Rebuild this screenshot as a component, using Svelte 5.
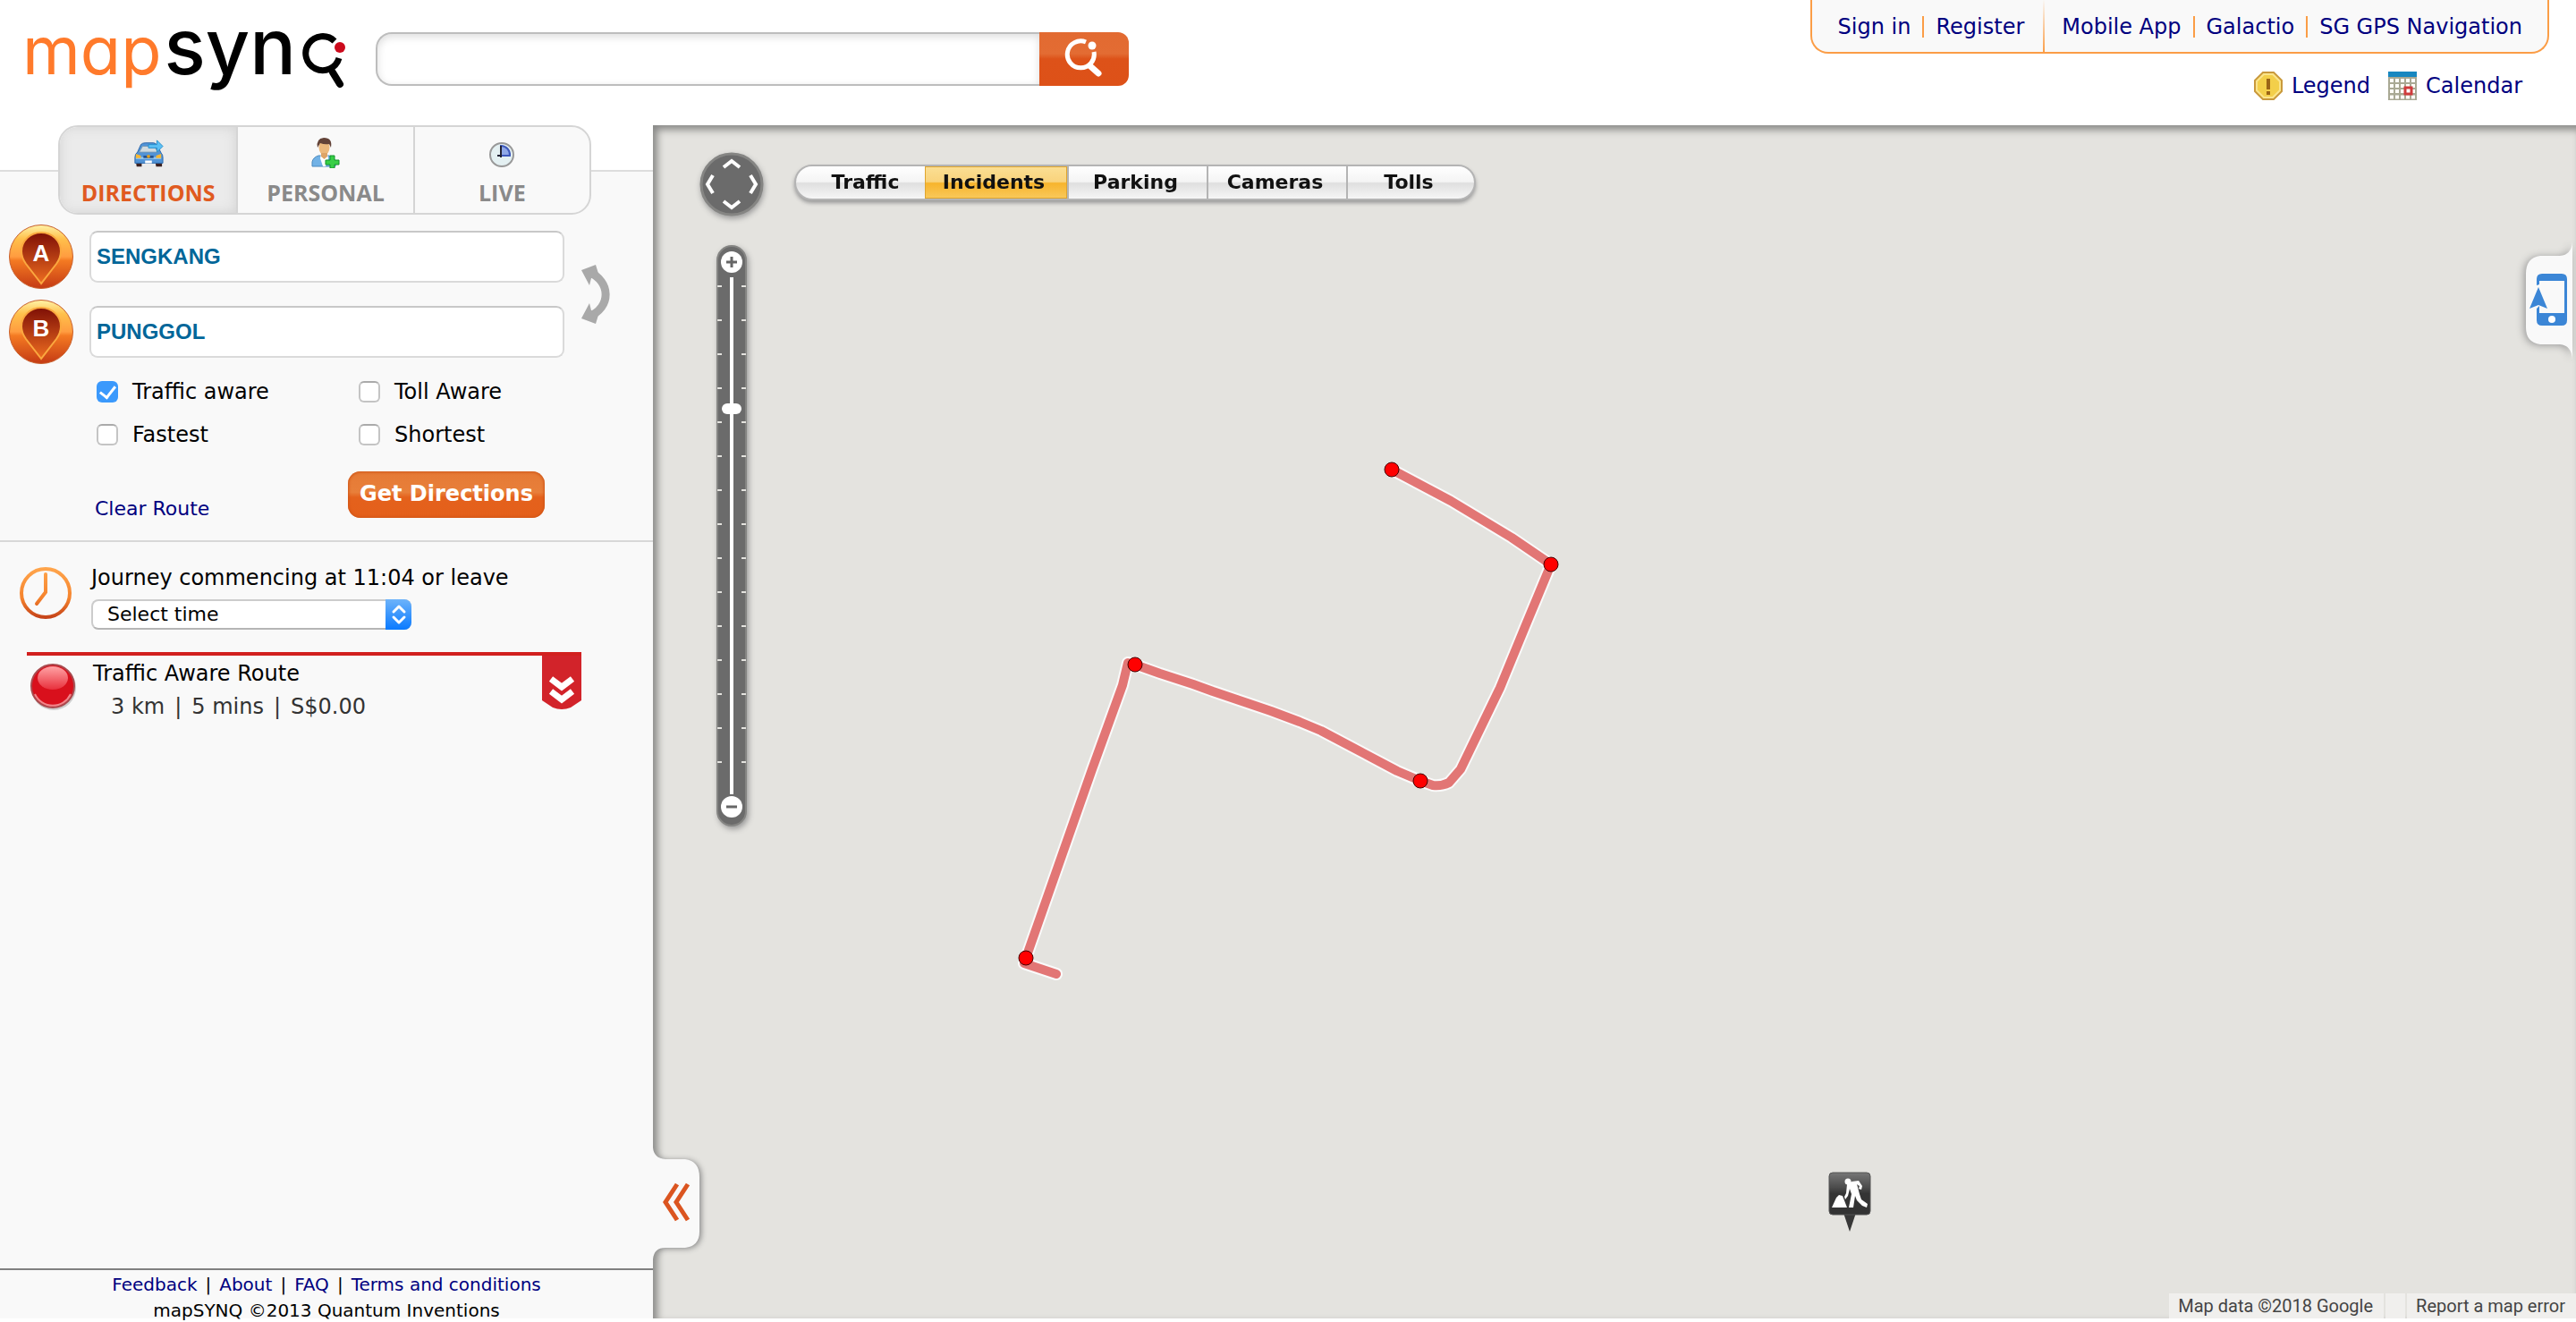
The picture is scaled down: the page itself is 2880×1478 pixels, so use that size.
<script>
  const accountLinks = ['Sign in', 'Register'];
  const productLinks = ['Mobile App', 'Galactio', 'SG GPS Navigation'];
  const layers = ['Traffic', 'Incidents', 'Parking', 'Cameras', 'Tolls'];
  const footerLinks = ['Feedback', 'About', 'FAQ', 'Terms and conditions'];
  const costs = ['3 km', '5 mins', 'S$0.00'];

  let activeLayer = $state('Incidents');
  let places = $state([
    { id: 'A', label: 'Start', value: 'SENGKANG' },
    { id: 'B', label: 'Destination', value: 'PUNGGOL' }
  ]);
  let options = $state([
    { label: 'Traffic aware', on: true },
    { label: 'Toll Aware', on: false },
    { label: 'Fastest', on: false },
    { label: 'Shortest', on: false }
  ]);

  const route =
    'M826 385 L892 420 L960 461 L1004 491 L977 556 L947 629 L903 720 L890 735 Q882 739 872 738 L858 733 L832 722 L747 677 L723 667 L691 655 L626 633 L604 625 L567 613 L539 603 L531 601 L525 626 L491 720 L417 931 L415 937 L451 949';
  const stops = [[826, 385], [1004, 491], [858, 733], [539, 603], [417, 931]];
  const ticks = Array.from({ length: 15 }, (_, i) => 46 + i * 38);

  function swap() {
    const first = places[0].value;
    places[0].value = places[1].value;
    places[1].value = first;
  }
</script>

<div class="page">
  <header>
    <a class="logo" href="#home" aria-label="mapsynq">
      <span class="map-word">map</span><span class="syn-word">syn</span>
      <svg width="52" height="64" viewBox="0 0 52 64" aria-hidden="true">
        <path d="M36 10 A19 19 0 1 0 41 29" fill="none" stroke="#000" stroke-width="7" />
        <path d="M34 45 L42 58" stroke="#000" stroke-width="8" stroke-linecap="round" />
        <circle cx="42" cy="17" r="6" fill="#cc0a1c" />
      </svg>
    </a>
    <form class="search" onsubmit={(e) => e.preventDefault()}>
      <input type="text" aria-label="Search" />
      <button aria-label="Search">
        <svg width="46" height="46" viewBox="0 0 46 46" aria-hidden="true">
          <path d="M25 4 A15 15 0 1 0 34 15" fill="none" stroke="#fff" stroke-width="5" />
          <path d="M30 31 L39 39" stroke="#fff" stroke-width="7" stroke-linecap="round" />
          <circle cx="32" cy="8" r="4.500" fill="#fff" />
        </svg>
      </button>
    </form>
    <div class="header-right">
      <nav class="top-nav" aria-label="Site">
        <div class="group account">
          {#each accountLinks as link}<a href="#top">{link}</a>{/each}
        </div>
        <div class="group products">
          {#each productLinks as link}<a href="#top">{link}</a>{/each}
        </div>
      </nav>
      <div class="tools">
        <a href="#legend">
          <svg width="32" height="32" viewBox="0 0 32 32" aria-hidden="true">
            <path d="M10 1 H22 L31 10 V22 L22 31 H10 L1 22 V10Z" fill="#f3cf4a" stroke="#c9993c" stroke-width="2" />
            <path d="M11 3 H21 L29 11 V21 L21 29 H11 L3 21 V11Z" fill="none" stroke="#fae48c" stroke-width="2" />
            <path d="M14 8 H18 V20 H14Z M14 22 H18 V26 H14Z" fill="#9a6416" />
          </svg>Legend</a>
        <a href="#calendar">
          <svg width="32" height="32" viewBox="0 0 32 32" aria-hidden="true">
            <path d="M0 0H32V32H0Z" fill="#a9a994" />
            <path d="M0 0H32V6H0Z" fill="#1787c0" />
            <path d="M2 10H30M2 16H30M2 22H30M2 28.500H30" stroke="#fffef8" stroke-width="4" stroke-dasharray="4 2" />
            <rect x="19" y="18" width="7" height="7" fill="#fff" stroke="#cf3c3c" stroke-width="3" />
          </svg>Calendar</a>
      </div>
    </div>
  </header>

  <main>
    <aside>
      <div class="tabs">
        <button class="active">
          <svg width="34" height="32" viewBox="0 0 36 32" aria-hidden="true">
            <path d="M3 25h7v6H4zM26 25h8v6h-7z" fill="#3c2222" />
            <path d="M9 5 Q11 3 14 3 H24 Q27 3 29 7 L33 15 Q35 17 35 20 V27 H2 V20 Q2 16 5 14Z" fill="#5193d6" stroke="#2c66a8" />
            <path d="M11 7 H25 L29 14 H7Z" fill="#cfdae0" stroke="#7598b4" />
            <path d="M3 21h30" stroke="#9bccf2" stroke-width="2" />
            <path d="M3 16l6 2v3H3zM33 16l-6 2v3h6z" fill="#f7b733" />
            <path d="M12 18h12v3H12z" fill="#24508c" />
            <circle cx="18" cy="19" r="2" fill="#e0a020" />
            <path d="M14 24h8v3h-8z" fill="#fff" />
            <path d="M18 5H28V0L35 7L28 14V9H18Z" fill="#5cc0f5" stroke="#248dcb" />
          </svg>
          DIRECTIONS
        </button>
        <button>
          <svg width="32" height="34" viewBox="0 0 32 34" aria-hidden="true">
            <path d="M1 32 V27 Q2 22 8 20 H20 Q26 22 27 27 V32Z" fill="#72b2e6" stroke="#4b8abf" />
            <path d="M11 18h7l1 5-3 9h-3l-3-9z" fill="#fff" />
            <ellipse cx="14.500" cy="11" rx="6" ry="8" fill="#ecb97d" />
            <path d="M11 17h7v4l-3.500 3L11 21z" fill="#dda468" />
            <path d="M7 11 Q5 1 14 0 Q24 0 22 11 L20 7 Q15 8 10 6Z" fill="#634338" />
            <path d="M21 20h5v5h5v5h-5v4h-5v-4h-5v-5h5z" fill="#38cf46" stroke="#13922a" />
          </svg>
          PERSONAL
        </button>
        <button>
          <svg width="30" height="30" viewBox="0 0 30 30" aria-hidden="true">
            <circle cx="15" cy="15" r="13" fill="#e4f0f2" stroke="#999" stroke-width="2" />
            <path d="M14 5 A10 10 0 0 1 24 16H14Z" fill="#8fa8e8" stroke="#3e58bb" stroke-width="2" />
            <path d="M14 5V18M10 16H14" stroke="#223" stroke-width="2" />
          </svg>
          LIVE
        </button>
      </div>

      <div class="endpoints">
        <div class="fields">
          {#each places as place}
            <label class="field">
              <svg width="72" height="74" viewBox="0 0 72 74" role="img" aria-label={place.label}>
                <defs>
                  <linearGradient id={'ring' + place.id} x1="0" y1="0" x2="0" y2="1">
                    <stop offset="0" stop-color="#fff3a8" /><stop offset=".22" stop-color="#ffc04b" />
                    <stop offset=".5" stop-color="#ff9c40" /><stop offset=".56" stop-color="#f47a22" /><stop offset="1" stop-color="#c43a14" />
                  </linearGradient>
                  <linearGradient id={'pin' + place.id} x1="0" y1="0" x2="0" y2="1">
                    <stop offset="0" stop-color="#7e0f06" /><stop offset="1" stop-color="#ee6d20" />
                  </linearGradient>
                </defs>
                <circle cx="36" cy="37" r="35.500" fill={`url(#ring${place.id})`} stroke="#c9602c" />
                <path d="M36 67 L19 45 Q14 38 14 31 A22 21 0 0 1 58 31 Q58 38 53 45Z" fill={`url(#pin${place.id})`} stroke="#fba83f" stroke-width="2" />
                <text x="36" y="42" text-anchor="middle" class="pin-letter">{place.id}</text>
              </svg>
              <input type="text" bind:value={place.value} />
            </label>
          {/each}
        </div>
        <button class="swap" aria-label="Swap start and destination" onclick={swap}>
          <svg width="32" height="68" viewBox="0 0 32 68" aria-hidden="true">
            <path d="M8 9 C33 19 34 49 8 59" fill="none" stroke="#a9a9a9" stroke-width="9" />
            <path d="M16 1 L0 7 L9 24 L11 16 L20 14Z M16 67 L0 61 L9 44 L11 52 L20 54Z" fill="#a9a9a9" />
          </svg>
        </button>
      </div>

      <div class="options">
        {#each options as option}
          <label><input type="checkbox" bind:checked={option.on} />{option.label}</label>
        {/each}
      </div>

      <div class="actions">
        <a href="#clear">Clear Route</a>
        <button>Get Directions</button>
      </div>

      <section class="departure">
        <svg width="58" height="58" viewBox="0 0 58 58" aria-hidden="true">
          <defs><linearGradient id="clock" x1="0" y1="0" x2="0" y2="58" gradientUnits="userSpaceOnUse">
            <stop offset="0" stop-color="#ffa64d" /><stop offset=".6" stop-color="#f5832d" /><stop offset="1" stop-color="#c23f17" />
          </linearGradient></defs>
          <circle cx="29" cy="29" r="27" fill="none" stroke="url(#clock)" stroke-width="4" />
          <path d="M29 8 V28 L19 41" fill="none" stroke="url(#clock)" stroke-width="4" stroke-linecap="round" />
        </svg>
        <div>
          <label for="leave-time">Journey commencing at 11:04 or leave</label>
          <div class="select">
            <select id="leave-time"><option>Select time</option></select>
            <svg width="29" height="34" viewBox="0 0 29 34" aria-hidden="true">
              <path d="M9 14 L15 8 L21 14 M9 20 L15 26 L21 20" fill="none" stroke="#fff" stroke-width="3" stroke-linecap="round" stroke-linejoin="round" />
            </svg>
          </div>
        </div>
      </section>

      <article class="result">
        <svg class="ball" width="52" height="54" viewBox="0 0 52 54" aria-hidden="true">
          <defs>
            <linearGradient id="shine" x1="0" y1="0" x2="0" y2="1"><stop offset="0" stop-color="#ffa3a5" /><stop offset="1" stop-color="#e8303c" /></linearGradient>
          </defs>
          <circle cx="26" cy="27" r="25" fill="#cfcfcf" />
          <circle cx="25" cy="25" r="24" fill="#d9101c" stroke="#a94b4f" stroke-width="2" />
          <path d="M5 34 A22 22 0 0 0 45 34" fill="none" stroke="#f0868b" stroke-width="2" />
          <ellipse cx="25" cy="16" rx="17" ry="13" fill="url(#shine)" />
        </svg>
        <div class="summary">
          <div>Traffic Aware Route</div>
          <div class="cost">
            {#each costs as cost, i}{#if i}<span class="bar">|</span>{/if}<span>{cost}</span>{/each}
          </div>
        </div>
        <button class="expand" aria-label="Show route details">
          <svg width="44" height="60" viewBox="0 0 44 60" aria-hidden="true">
            <path d="M0 0H44V50L32 58Q22 62 12 58L0 50Z" fill="#d2232a" />
            <path d="M10 26 L22 35 L34 26 M10 40 L22 49 L34 40" fill="none" stroke="#fff" stroke-width="7" />
          </svg>
        </button>
      </article>

      <footer>
        <div>
          {#each footerLinks as link, i}{#if i}<span class="bar">|</span>{/if}<a href="#footer">{link}</a>{/each}
        </div>
        <div>mapSYNQ ©2013 Quantum Inventions</div>
      </footer>
    </aside>

    <section class="map" aria-label="Map">
      <svg class="route" width="100%" height="100%" aria-hidden="true">
        <path d={route} class="casing" />
        <path d={route} class="line" />
        {#each stops as [x, y]}<circle cx={x} cy={y} r="8" />{/each}
      </svg>

      <button class="pan" aria-label="Pan map">
        <svg width="72" height="72" viewBox="0 0 72 72" aria-hidden="true">
          <circle cx="36" cy="36" r="34" fill="#6b6b6b" stroke="#858583" stroke-width="3" />
          <path d="M27 17 L36 10 L45 17 M27 55 L36 62 L45 55 M15 26 L9 36 L15 46 M57 26 L63 36 L57 46" fill="none" stroke="#fff" stroke-width="4" />
        </svg>
      </button>

      <div class="zoom">
        <svg width="34" height="650" viewBox="0 0 34 650" role="img" aria-label="Zoom level">
          <rect x="1" y="1" width="32" height="648" rx="16" fill="#6b6b6b" stroke="#858583" stroke-width="2" />
          {#each ticks as y}<path d={`M1 ${y}h5M28 ${y}h5`} stroke="#e4e3df" stroke-width="2" />{/each}
          <path d="M17 36V614" stroke="#fff" stroke-width="4" />
          <rect x="6" y="177" width="22" height="12" rx="6" fill="#fff" />
          <circle cx="17" cy="19" r="12" fill="#fff" /><circle cx="17" cy="628" r="12" fill="#fff" />
          <path d="M11 19h12M17 13v12M11 628h12" stroke="#666" stroke-width="3" />
        </svg>
      </div>

      <div class="layers">
        {#each layers as layer}
          <button class:active={activeLayer === layer} onclick={() => (activeLayer = layer)}>{layer}</button>
        {/each}
      </div>

      <button class="collapse" aria-label="Hide panel">
        <svg width="60" height="126" viewBox="0 0 60 126" aria-hidden="true">
          <path d="M0 0 Q1 12 14 13 H36 Q52 15 52 33 V94 Q52 110 36 112 H14 Q1 112 0 125Z" fill="#f9f9f9" />
          <path d="M27 41 L14 61 L27 81 M39 41 L26 61 L39 81" fill="none" stroke="#db5520" stroke-width="5" />
        </svg>
      </button>

      <button class="mobile" aria-label="Mobile app">
        <svg width="52" height="134" viewBox="0 0 52 134" aria-hidden="true">
          <path d="M52 0 Q51 15 38 16 H16 Q0 18 0 36 V96 Q0 113 16 115 H38 Q51 116 52 132Z" fill="#f9f9f9" />
          <path d="M18 36H40Q46 36 46 42V88Q46 94 40 94H18Q12 94 12 88V75L15 72V80H43V44H15V48L12 49V42Q12 36 18 36Z" fill="#3b86d6" />
          <path d="M14 51 L24 75 L14 71 L4 75Z" fill="#3b86d6" />
          <circle cx="29" cy="87" r="4" fill="#fff" />
        </svg>
      </button>

      <svg class="roadwork" width="48" height="68" viewBox="0 0 48 68" role="img" aria-label="Roadworks">
        <defs><linearGradient id="sign" x1="0" y1="0" x2="0" y2="1"><stop offset="0" stop-color="#777" /><stop offset=".35" stop-color="#4c4c4c" /><stop offset=".5" stop-color="#343434" /><stop offset="1" stop-color="#333" /></linearGradient></defs>
        <path d="M17 46 L24 67 L31 46Z" fill="#383838" />
        <rect x="1" y="1" width="46" height="47" rx="4" fill="url(#sign)" stroke="#555" />
        <path d="M4 40 L9 29 L12 26 L16 27 L21 40Z" fill="#fff" />
        <circle cx="22" cy="11" r="3.500" fill="#fff" />
        <path d="M21 14 L26 11 L34 10 L38 16 L37 20 L34 19 L35 16 L32 14 L35 25 L37 31 L44 36 L43 40 L38 38 L32 32 L30 27 L28 40 H23 L26 25 L24 19 L22 27 L19 31 L18 28 L20 24Z" fill="#fff" />
      </svg>

      <div class="credits">
        <span>Map data ©2018 Google</span>
        <span class="blank"></span>
        <a href="#report">Report a map error</a>
      </div>
    </section>
  </main>
</div>

<style>
  :global(body) { margin: 0; background: #fff; }
  .page {
    box-sizing: border-box;
    min-height: 100vh;
    padding-bottom: 4px;
    display: flex;
    flex-direction: column;
    font: 24px/28px Verdana, "DejaVu Sans", sans-serif;
    color: #000;
  }
  .page :global(*) { box-sizing: border-box; }
  svg { display: block; flex: none; }
  a { color: #00007f; text-decoration: none; }
  button { padding: 0; border: 0; background: none; font: inherit; cursor: pointer; }

  header { display: flex; height: 140px; flex: none; padding-right: 30px; }
  .logo {
    display: flex;
    align-items: baseline;
    width: 390px;
    padding-left: 25px;
    font-family: Inter, "Open Sans", sans-serif;
    font-feature-settings: "cv11";
    line-height: 104px;
  }
  .logo svg { align-self: flex-start; margin: 36px 0 0 auto; }
  .map-word { color: #ff7a2b; font-size: 74px; font-weight: 400; }
  .syn-word { color: #000; font-size: 86px; font-weight: 500; margin-left: 3px; }
  .search { display: flex; width: 842px; height: 60px; margin: 36px 0 0 30px; }
  .search input {
    flex: 1;
    min-width: 0;
    padding: 0 16px;
    border: 2px solid #bdbdbd;
    border-right: 0;
    border-radius: 18px 0 0 18px;
    box-shadow: inset 0 3px 10px #ddd;
    font: inherit;
    outline: 0;
  }
  .search button {
    width: 100px;
    display: grid;
    place-items: center;
    border-radius: 0 12px 12px 0;
    background: linear-gradient(#e26a31, #e36c33 40%, #dd5219 50%, #dd5118);
  }

  .header-right { margin-left: auto; }
  .top-nav {
    display: flex;
    height: 60px;
    border: 2px solid #fb9d46;
    border-top: 0;
    border-radius: 0 0 20px 20px;
    background: #f9f9f9;
  }
  .group { display: flex; align-items: center; padding-top: 2px; }
  .group a { line-height: 24px; padding: 0 13px; }
  .group a + a { border-left: 2px solid #fb9d46; }
  .account { padding-left: 16px; padding-right: 8px; border-right: 2px solid; border-image: linear-gradient(#f9f9f9, #fb9d46) 1; }
  .products { padding-left: 6px; padding-right: 15px; }
  .tools { display: flex; justify-content: flex-end; gap: 20px; margin: 20px 30px 0 0; }
  .tools a { display: flex; align-items: center; gap: 10px; line-height: 32px; }

  main { display: flex; flex: 1; }
  aside {
    width: 730px;
    flex: none;
    display: flex;
    flex-direction: column;
    background: linear-gradient(#fff 50px, #ddd 50px, #ddd 52px, #f9f9f9 52px);
  }
  .tabs {
    display: grid;
    grid-template-columns: repeat(3, 1fr);
    width: 596px;
    height: 100px;
    margin-left: 65px;
    border: 2px solid #d5d5d5;
    border-radius: 22px;
    background: #f9f9f9;
    overflow: hidden;
  }
  .tabs button {
    display: flex;
    flex-direction: column;
    align-items: center;
    justify-content: flex-end;
    gap: 14px;
    padding-bottom: 10px;
    font: bold 25px/26px "Open Sans", sans-serif;
    color: #8a8a8a;
  }
  .tabs button + button { border-left: 2px solid #d5d5d5; }
  .tabs .active { color: #e05a20; background: #ebebeb; box-shadow: inset 0 0 14px #d2d2d2; }

  .endpoints { display: flex; align-items: center; gap: 19px; padding: 10px 0 0 10px; }
  .fields { display: grid; gap: 10px; }
  .field { display: flex; align-items: center; gap: 18px; }
  .field input {
    width: 531px;
    height: 58px;
    padding: 0 6px;
    border: 2px solid #dadada;
    border-top-color: #c8c8c8;
    border-radius: 9px;
    background: #fff;
    font: bold 24px "Liberation Sans", Arial, sans-serif;
    color: #006699;
  }
  .pin-letter { font: bold 26px "Liberation Sans", Arial, sans-serif; fill: #fff; }

  .options {
    display: grid;
    grid-template-columns: 293px 1fr;
    grid-auto-rows: 48px;
    margin: 6px 0 0 108px;
  }
  .options label { display: flex; align-items: center; gap: 16px; }
  .options input {
    appearance: none;
    width: 24px;
    height: 24px;
    margin: 0;
    border: 2px solid #c4c4c4;
    border-top-color: #aaa;
    border-radius: 6px;
    background: #fff;
    display: grid;
    place-items: center;
  }
  .options input:checked { border: 0; background: #3b99fc; }
  .options input:checked::after {
    content: "";
    width: 8px;
    height: 14px;
    margin-bottom: 4px;
    border: solid #fff;
    border-width: 0 3px 3px 0;
    rotate: 38deg;
  }

  .actions {
    display: flex;
    justify-content: space-between;
    align-items: flex-start;
    padding: 17px 121px 22px 106px;
    border-bottom: 2px solid #d8d8d8;
  }
  .actions a { padding-top: 29px; font-size: 22px; line-height: 26px; }
  .actions button {
    width: 220px;
    height: 52px;
    padding-bottom: 3px;
    border-radius: 14px;
    background: linear-gradient(#e57a35, #e87f3a 45%, #e4611c 56%, #e4601b);
    box-shadow: inset 0 0 3px 1px #cf5517;
    color: #fff;
    font-weight: bold;
    white-space: nowrap;
  }

  .departure { display: flex; gap: 22px; padding: 26px 0 0 22px; }
  .departure > svg { margin-top: 2px; }
  .departure label { display: block; }
  .select { display: flex; position: relative; width: 358px; height: 34px; margin-top: 10px; }
  .select select {
    appearance: none;
    width: 100%;
    padding: 0 40px 0 16px;
    border: 2px solid #ccc;
    border-bottom-color: #b5b5b5;
    border-radius: 8px;
    background: #fff;
    color: #000;
    font: 22px/28px Verdana, "DejaVu Sans", sans-serif;
  }
  .select svg {
    position: absolute;
    top: 0;
    right: 0;
    border-radius: 0 8px 8px 0;
    background: linear-gradient(#6db3fa, #0a7aff);
    pointer-events: none;
  }

  .result {
    display: flex;
    width: 620px;
    margin: 25px 0 0 30px;
    border-top: 4px solid #d2201f;
  }
  .ball { margin: 9px 0 0 4px; }
  .summary { flex: 1; display: grid; align-content: start; gap: 9px; padding: 6px 0 0 18px; }
  .cost { padding-left: 20px; color: #333; }
  .cost .bar { margin: 0 11px; }
  .expand { align-self: flex-start; }

  footer {
    height: 56px;
    margin-top: auto;
    padding-top: 3px;
    border-top: 2px solid #808080;
    display: flex;
    flex-direction: column;
    gap: 3px;
    text-align: center;
    font-size: 20px;
    line-height: 26px;
  }
  footer .bar { margin: 0 9px; }

  .map {
    position: relative;
    flex: 1;
    min-width: 0;
    overflow: hidden;
    background: #e4e3df;
    box-shadow: inset 5px 5px 8px #888886;
  }
  .route { position: absolute; inset: 0; }
  .route path { fill: none; stroke-linecap: round; stroke-linejoin: round; }
  .casing { stroke: #fafafa; stroke-width: 14px; }
  .line { stroke: #e27675; stroke-width: 10px; }
  .route circle { fill: #f00; stroke: #400; stroke-width: 1px; }
  .pan { position: absolute; left: 52px; top: 30px; filter: drop-shadow(1px 3px 3px #999); }
  .zoom { position: absolute; left: 71px; top: 134px; filter: drop-shadow(2px 3px 3px #999); }
  .layers {
    position: absolute;
    left: 158px;
    top: 44px;
    display: grid;
    grid-template-columns: 144px 159px 156px 156px 143px;
    height: 40px;
    border: 2px solid #b4b4b4;
    border-radius: 20px;
    overflow: hidden;
    filter: drop-shadow(0 3px 2px #999);
  }
  .layers button {
    padding-right: 5px;
    background: linear-gradient(#fff, #f4f4f4 48%, #dfdfdf 52%, #f6f6f6);
    font-size: 22px;
    line-height: 26px;
    font-weight: bold;
    color: #111;
  }
  .layers button:first-child { padding-left: 16px; }
  .layers button + button { border-left: 2px solid #b4b4b4; }
  .layers .active {
    border: 0;
    background: linear-gradient(#fbdf94, #f9d37c 48%, #f7b42c 52%, #f9c95c);
    box-shadow: inset 0 0 0 1px #dfa52e;
  }
  .collapse { position: absolute; left: 0; bottom: 65px; filter: drop-shadow(2px 1px 3px #888); }
  .mobile { position: absolute; right: 4px; top: 130px; filter: drop-shadow(-2px 1px 4px #999); }
  .roadwork { position: absolute; left: 1314px; top: 1170px; }
  .credits {
    position: absolute;
    right: 0;
    bottom: 0;
    display: flex;
    gap: 2px;
    font: 20px/28px Roboto, sans-serif;
    color: #444;
  }
  .credits span, .credits a { padding: 0 12px 0 10px; background: #f0efed; color: #444; }
</style>
